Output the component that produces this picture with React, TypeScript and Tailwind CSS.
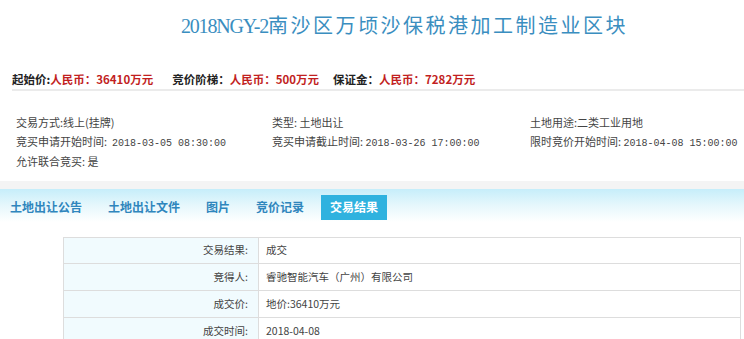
const font = { fontFamily: '"Noto Sans CJK SC", "Liberation Sans", sans-serif' };
const mono = { fontFamily: '"Liberation Mono", monospace' };

type Cell = [string, string?];

const infoRows: Cell[][] = [
  [['交易方式:线上(挂牌)'], ['类型: 土地出让'], ['土地用途:二类工业用地']],
  [
    ['竞买申请开始时间:  ', '2018-03-05 08:30:00'],
    ['竞买申请截止时间: ', '2018-03-26 17:00:00'],
    ['限时竞价开始时间: ', '2018-04-08 15:00:00'],
  ],
  [['允许联合竞买: 是'], [''], ['']],
];

const tabs = ['土地出让公告', '土地出让文件', '图片', '竞价记录', '交易结果'];

const results = [
  ['交易结果:', '成交'],
  ['竞得人:', '睿驰智能汽车（广州）有限公司'],
  ['成交价:', '地价:36410万元'],
  ['成交时间:', '2018-04-08'],
];

const colWidths = ['w-[272px] pl-[16px]', 'w-[258px]', ''];

export default function App() {
  return (
    <div className="w-[744px] h-[339px] overflow-hidden bg-white" style={font}>
      <h1
        className="pt-[11px] pl-[181px] h-[41px] flex items-center text-[20px] text-[#3a8ec0]"
        style={{ fontFamily: '"Liberation Serif", "Noto Sans CJK SC", serif' }}
      >
        <span className="tracking-[-1.2px]">2018NGY-2</span>
        <span className="tracking-[2.5px]">南沙区万顷沙保税港加工制造业区块</span>
      </h1>

      <div className="mt-[29px] ml-[12px] flex items-center h-[21px] border-b-2 border-[#ebebeb] text-[11.5px] font-bold">
        <span className="text-[#222]">起始价:</span>
        <span className="text-[#c21f1f]">人民币：36410万元</span>
        <span className="ml-[19px] text-[#222]">竞价阶梯：</span>
        <span className="text-[#c21f1f]">人民币：500万元</span>
        <span className="ml-[14px] text-[#222]">保证金：</span>
        <span className="text-[#c21f1f]">人民币：7282万元</span>
      </div>

      <div className="mt-[22px] flex flex-col text-[11px] text-[#444]">
        {infoRows.map((r, i) => (
          <div key={i} className="flex items-center h-[19.5px] leading-none">
            {r.map(([label, date], j) => (
              <span key={j} className={`${colWidths[j]} whitespace-pre`}>
                {label}
                {date && (
                  <span className="text-[10px]" style={mono}>
                    {date}
                  </span>
                )}
              </span>
            ))}
          </div>
        ))}
      </div>

      <div className="mt-[9px] h-[8px] bg-[#f4f4f4]" />
      <div className="h-[33px] pt-[6px] bg-gradient-to-b from-[#c6eefa] via-[#e6f7fc] to-white">
        <div className="flex items-center pl-[10px] gap-[26px] text-[12px] font-bold text-[#2f86bd]">
          {tabs.map((t, i) =>
            i === tabs.length - 1 ? (
              <span
                key={t}
                className="-ml-[9px] h-[25px] px-[9px] flex items-center bg-[#2fb2df] text-white"
              >
                {t}
              </span>
            ) : (
              <span key={t}>{t}</span>
            ),
          )}
        </div>
      </div>

      <table className="mt-[15px] ml-[63px] w-[678px] border-collapse text-[10.5px] text-[#444]">
        <tbody>
          {results.map(([k, v]) => (
            <tr key={k} className="h-[26.7px]">
              <td className="w-[195px] border border-[#dddddd] bg-[#f1fbfe] text-right pr-[10px]">
                {k}
              </td>
              <td className="border border-[#dddddd] pl-[7px]">{v}</td>
            </tr>
          ))}
        </tbody>
      </table>
    </div>
  );
}
